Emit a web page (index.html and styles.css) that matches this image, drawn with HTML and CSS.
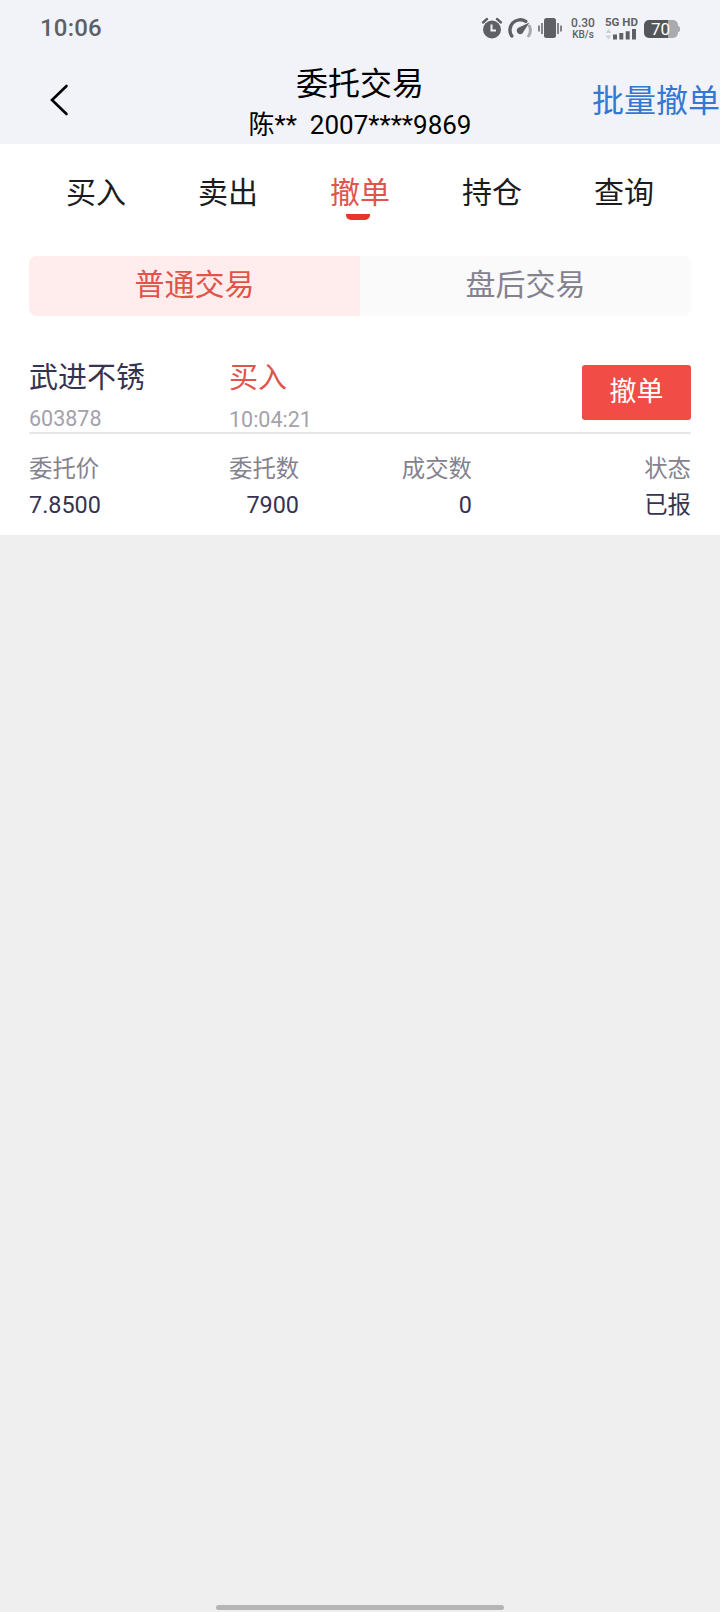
FILE: index.html
```html
<!DOCTYPE html>
<html lang="zh-CN">
<head>
    <meta charset="UTF-8">
    <meta name="viewport" content="width=device-width, initial-scale=1.0">
    <title>委托交易</title>
    <link rel="stylesheet" href="styles.css">
</head>
<body>
    <div class="status-bar">
        <span class="time">10:06</span>
        <div class="status-icons">
            <svg class="icon-alarm" width="20" height="22" viewBox="0 0 20 22">
                <circle cx="10" cy="12.5" r="9" fill="#5f6063"/>
                <path d="M1 5.5L5 2M19 5.5L15 2" stroke="#5f6063" stroke-width="2.4" stroke-linecap="round"/>
                <path d="M9.5 7.5V13.5H14" fill="none" stroke="#f2f3f8" stroke-width="2"/>
            </svg>
            <svg class="icon-gauge" width="24" height="22" viewBox="0 0 24 22">
                <path d="M3.8 19A10.3 10.3 0 0 1 17.8 4.4" fill="none" stroke="#5f6063" stroke-width="3.4" stroke-linecap="round"/>
                <path d="M21.4 9A10.3 10.3 0 0 1 20.6 19" fill="none" stroke="#a9aaad" stroke-width="3" stroke-linecap="round"/>
                <path d="M21.5 5.5L15.6 14.4A3.5 3.5 0 1 1 10.8 10.4Z" fill="#5f6063"/>
            </svg>
            <svg class="icon-vibrate" width="24" height="22" viewBox="0 0 24 22">
                <rect x="6" y="1" width="12" height="20" rx="2.5" fill="#5f6063"/>
                <path d="M1 8.5V14.5M4 6V17M20 6V17M23 8.5V14.5" stroke="#5f6063" stroke-width="1.5"/>
            </svg>
            <div class="speed">
                <span>0.30</span>
                <span class="speed-unit">KB/s</span>
            </div>
            <div class="network">
                <span>5G HD</span>
                <svg width="32" height="12" viewBox="0 0 32 12">
                    <path d="M0.5 5L3.5 1L6.5 5ZM0.5 7.5L3.5 11.5L6.5 7.5Z" fill="#d0d1d5"/>
                    <path d="M10 6.5V11.5M16.3 5V11.5M22.7 3.2V11.5M29 1V11.5" stroke="#5f6063" stroke-width="4"/>
                </svg>
            </div>
            <div class="battery"><span>70</span></div>
        </div>
    </div>

    <header class="header">
        <svg class="back" width="20" height="34" viewBox="0 0 20 34">
            <path d="M17.5 3L3 17L17.5 31" fill="none" stroke="#000" stroke-width="2.6" stroke-linecap="round"/>
        </svg>
        <div class="title">
            <h1>委托交易</h1>
            <p>陈**&nbsp; 2007****9869</p>
        </div>
        <a class="batch">批量撤单</a>
    </header>

    <main class="content">
        <nav class="tabs">
            <a>买入</a>
            <a>卖出</a>
            <a class="active">撤单</a>
            <a>持仓</a>
            <a>查询</a>
        </nav>

        <div class="segment">
            <span class="selected">普通交易</span>
            <span>盘后交易</span>
        </div>

        <section class="order">
            <div class="order-head">
                <div>
                    <div class="name">武进不锈</div>
                    <div class="code">603878</div>
                </div>
                <div>
                    <div class="name buy">买入</div>
                    <div class="code order-time">10:04:21</div>
                </div>
                <button type="button">撤单</button>
            </div>
            <div class="order-grid">
                <span class="label">委托价</span>
                <span class="label">委托数</span>
                <span class="label">成交数</span>
                <span class="label">状态</span>
                <span>7.8500</span>
                <span>7900</span>
                <span>0</span>
                <span>已报</span>
            </div>
        </section>
    </main>

    <div class="home-bar"></div>
</body>
</html>
```
FILE: styles.css
```css
* {
    box-sizing: border-box;
}
body {
    display: flex;
    flex-direction: column;
    height: 1612px;
    margin: 0;
    font-family: Roboto, "Noto Sans CJK SC", sans-serif;
    font-weight: 400;
    background-color: #efefef;
    overflow: hidden;
}
h1, p {
    margin: 0;
    font-weight: 400;
}

/* status bar */
.status-bar {
    display: flex;
    justify-content: space-between;
    height: 56px;
    padding: 0 40px;
    background-color: #f2f3f8;
    color: #5f6063;
}
.time {
    font-size: 24px;
    font-weight: 500;
    line-height: 56px;
    letter-spacing: 0.2px;
}
.status-icons {
    display: flex;
    align-items: flex-start;
    padding-top: 17px;
}
.icon-gauge {
    margin-left: 6px;
}
.icon-vibrate {
    margin-left: 6px;
}
.speed {
    display: flex;
    flex-direction: column;
    width: 26px;
    margin-left: 8px;
    padding-top: 1px;
    font-size: 12px;
    font-weight: 500;
    line-height: 11px;
    text-align: center;
}
.speed-unit {
    font-size: 10px;
}
.network {
    width: 33px;
    margin-left: 9px;
    font-size: 11.5px;
    font-weight: 700;
    line-height: 11px;
    white-space: nowrap;
}
.network span,
.network svg {
    display: block;
}
.battery {
    position: relative;
    width: 34px;
    height: 18px;
    margin: 3px 2px 0 6px;
    padding-right: 1px;
    border-radius: 5px;
    background: linear-gradient(to right, #555659 70%, #a9aaad 70%);
    color: #fff;
    font-size: 17px;
    line-height: 19px;
    text-align: center;
}
.battery::after {
    content: "";
    position: absolute;
    right: -2px;
    top: 6px;
    width: 2px;
    height: 6px;
    border-radius: 0 2px 2px 0;
    background-color: #a9aaad;
}

/* header */
.header {
    display: grid;
    grid-template-columns: 1fr auto 1fr;
    height: 88px;
    background-color: #f2f3f8;
}
.back {
    margin: 27px 0 0 49px;
}
.title {
    padding-top: 7px;
    text-align: center;
}
.title h1 {
    font-size: 32px;
    line-height: 42px;
}
.title p {
    font-size: 26px;
    line-height: 40px;
}
.batch {
    justify-self: end;
    color: #3478d4;
    font-size: 32px;
    line-height: 90px;
}

/* tabs */
.content {
    height: 391px;
    background-color: #fff;
}
.tabs {
    display: flex;
    height: 112px;
    padding: 0 30px;
}
.tabs a {
    position: relative;
    flex: 1;
    color: #1c1c1e;
    font-size: 30px;
    line-height: 98px;
    text-align: center;
}
.tabs .active {
    color: #e0544b;
}
.tabs .active::after {
    content: "";
    position: absolute;
    left: 52px;
    top: 70px;
    width: 24px;
    height: 6px;
    border-radius: 0 0 5px 5px;
    background-color: #ea3429;
}
.segment {
    display: flex;
    height: 60px;
    margin: 0 29px;
    border-radius: 8px;
    background-color: #fafafa;
    overflow: hidden;
}
.segment span {
    flex: 1;
    color: #85828f;
    font-size: 30px;
    line-height: 58px;
    text-align: center;
}
.segment .selected {
    background-color: #ffecec;
    color: #e0544b;
}

/* order */
.order {
    margin: 0 29px;
    color: #37334f;
}
.order-head {
    display: grid;
    grid-template-columns: 200px 1fr 109px;
    height: 118px;
    padding-top: 42px;
    border-bottom: 2px solid #e6e6e6;
}
.name {
    font-size: 29px;
    line-height: 40px;
}
.buy {
    color: #e0544b;
}
.code {
    margin-top: 1px;
    color: #a3a1ab;
    font-size: 21.5px;
    line-height: 40px;
}
.order-time {
    margin-top: 2px;
}
.order-head button {
    height: 55px;
    margin-top: 7px;
    padding: 0;
    border: none;
    border-radius: 3px;
    background-color: #f14c45;
    color: #fff;
    font-family: inherit;
    font-size: 27px;
    line-height: 51px;
}
.order-grid {
    display: grid;
    grid-template-columns: 200px 70px 173px 219px;
    padding-top: 17px;
    font-size: 23.4px;
    line-height: 36px;
    text-align: right;
    white-space: nowrap;
}
.order-grid span:nth-child(4n + 1) {
    text-align: left;
}
.order-grid .label {
    color: #85828f;
}

.home-bar {
    width: 288px;
    height: 5px;
    margin: auto auto 2px;
    border-radius: 3px;
    background-color: #b5b5b5;
}
```
